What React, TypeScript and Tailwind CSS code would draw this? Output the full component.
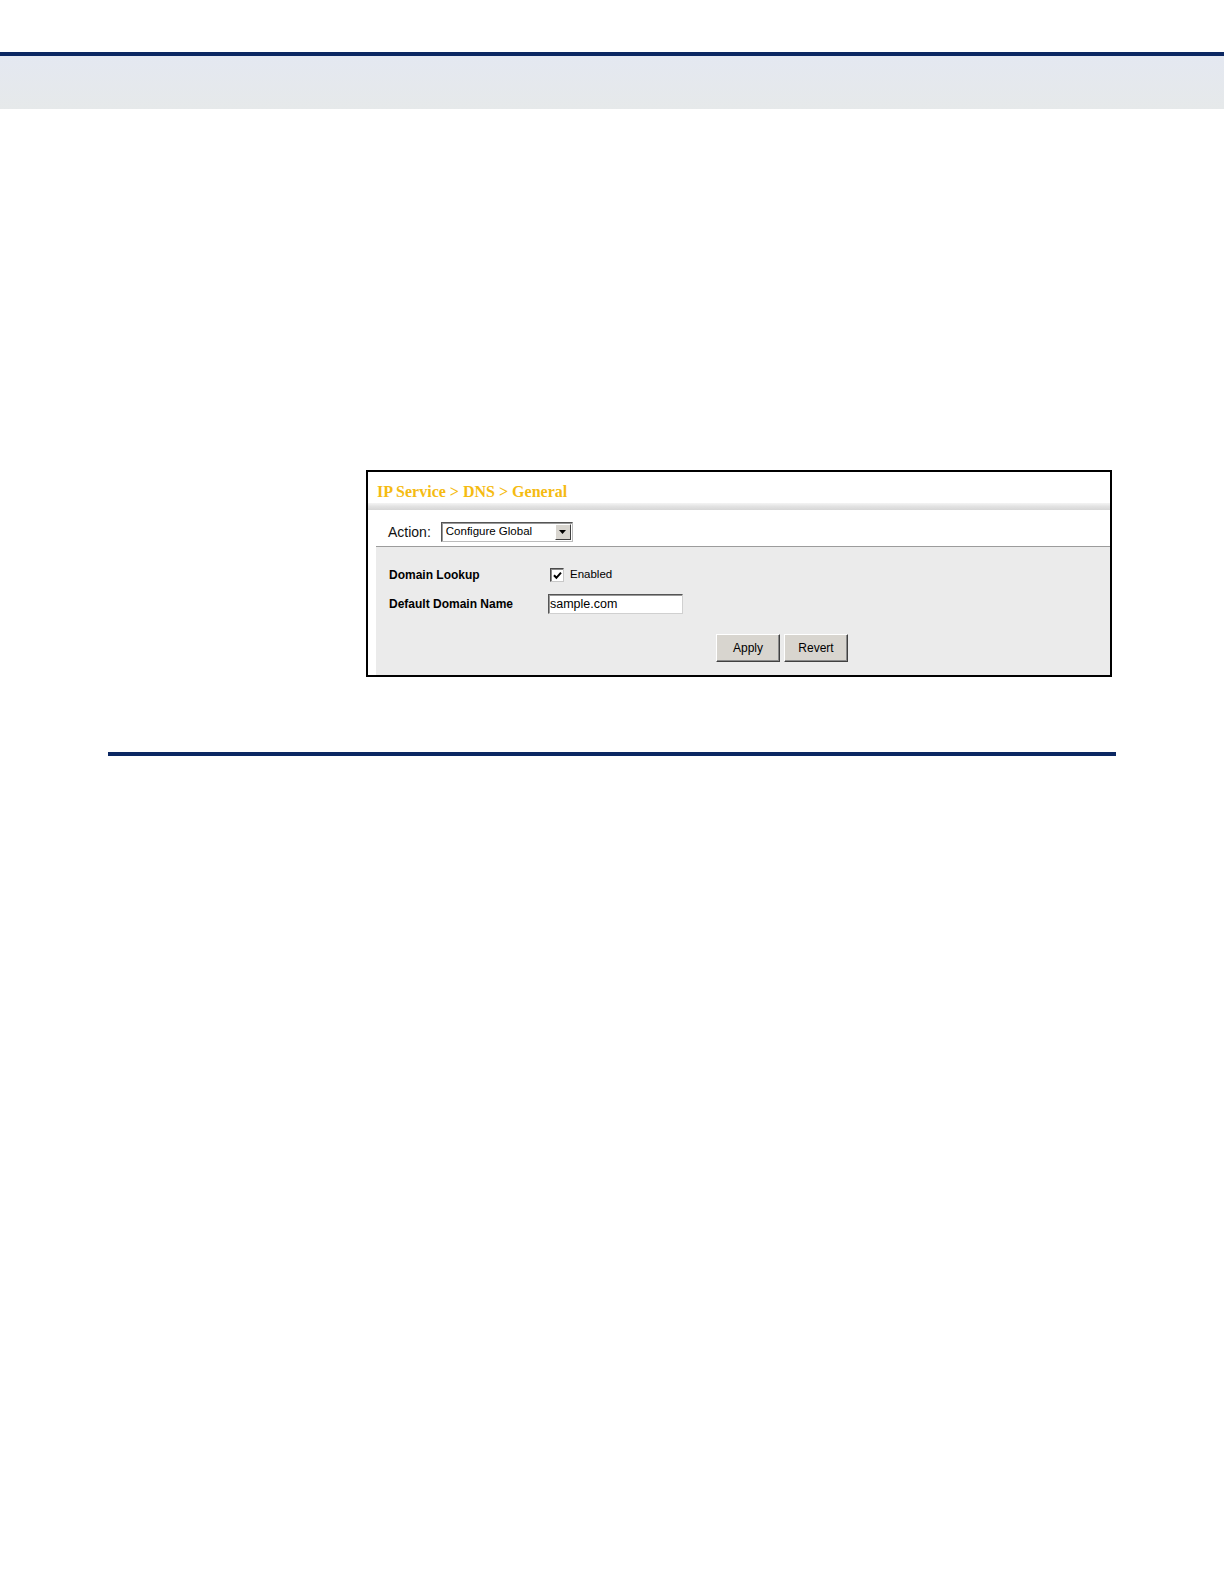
import React from "react"

const sans = { fontFamily: '"Liberation Sans", Arial, sans-serif' }

function Checkbox() {
  return (
    <span className="flex h-[14px] w-[14px] items-center justify-center border border-t-[#4a4a4a] border-l-[#4a4a4a] border-b-[#c8c8c8] border-r-[#c8c8c8] bg-white shadow-[inset_1px_1px_0_#8a8a8a]">
      <svg width="11" height="11" viewBox="0 0 11 11">
        <path d="M2 5.2 L4.4 7.8 L9 2.6" fill="none" stroke="#000" strokeWidth={2} />
      </svg>
    </span>
  )
}

function WinButton({ label }: { label: string }) {
  return (
    <button
      className="h-[28px] w-[64px] border border-t-white border-l-white border-b-[#404040] border-r-[#404040] bg-[#d8d5cf] text-[12px] text-black shadow-[inset_-1px_-1px_0_#8a8a8a]"
      style={sans}
    >
      {label}
    </button>
  )
}

export default function App() {
  return (
    <div className="min-h-[1584px] bg-white" style={sans}>
      {/* top header bar */}
      <div className="h-[52px]" />
      <div className="h-[4px] bg-[#0b2762]" />
      <div className="h-[53px] bg-gradient-to-b from-[#e4e8f1] to-[#e6e9ea]" />

      {/* DNS settings panel */}
      <div className="pl-[366px] pt-[361px]">
        <div className="flex h-[207px] w-[746px] flex-col border-2 border-black bg-white">
          <div
            className="h-[31px] pl-[9px] pt-[11px] text-[16px] font-bold leading-[18px] text-[#f5bb12]"
            style={{ fontFamily: '"Liberation Serif", "Times New Roman", serif' }}
          >
            IP Service &gt; DNS &gt; General
          </div>
          <div className="h-[7px] bg-gradient-to-b from-[#f4f4f4] via-[#e2e2e2] to-[#d6d6d6]" />

          <div className="flex h-[36px] items-center gap-[10px] pl-[20px] pt-[8px]">
            <span className="text-[14px] text-[#111]">Action:</span>
            <div className="flex h-[20px] w-[132px] items-center border border-t-[#555] border-l-[#555] border-b-[#bbb] border-r-[#bbb] bg-white shadow-[inset_1px_1px_0_#999]">
              <span className="flex-1 pl-[4px] text-[11.5px] text-black">Configure Global</span>
              <span className="mr-[1px] flex h-[16px] w-[16px] items-center justify-center border border-t-white border-l-white border-b-[#404040] border-r-[#404040] bg-[#d8d5cf]">
                <svg width="8" height="5" viewBox="0 0 8 5">
                  <path d="M0 0 H7 L3.5 4 Z" fill="#000" />
                </svg>
              </span>
            </div>
          </div>

          <div className="ml-[8px] flex-1 border-t border-[#9c9c9c] bg-[#ebebeb] pt-[15px]">
            <div className="grid grid-cols-[159px_1fr] pl-[13px]">
              <div className="flex h-[26px] items-center text-[12px] font-bold text-black">Domain Lookup</div>
              <div className="flex h-[26px] items-center gap-[6px] pl-[2px]">
                <Checkbox />
                <span className="text-[11.5px] text-black">Enabled</span>
              </div>
              <div className="flex h-[32px] items-center text-[12px] font-bold text-black">Default Domain Name</div>
              <div className="flex h-[32px] items-center">
                <div className="flex h-[20px] w-[135px] items-center border border-t-[#555] border-l-[#555] border-b-[#d0d0d0] border-r-[#d0d0d0] bg-white pl-[1px] text-[12.5px] text-black shadow-[inset_1px_1px_0_#999]">
                  sample.com
                </div>
              </div>
            </div>
            <div className="mt-[14px] flex gap-[4px] pl-[340px]">
              <WinButton label="Apply" />
              <WinButton label="Revert" />
            </div>
          </div>
        </div>
      </div>

      {/* section rule */}
      <div className="ml-[108px] mt-[75px] h-[4px] w-[1008px] bg-[#0b2762]" />
    </div>
  )
}
